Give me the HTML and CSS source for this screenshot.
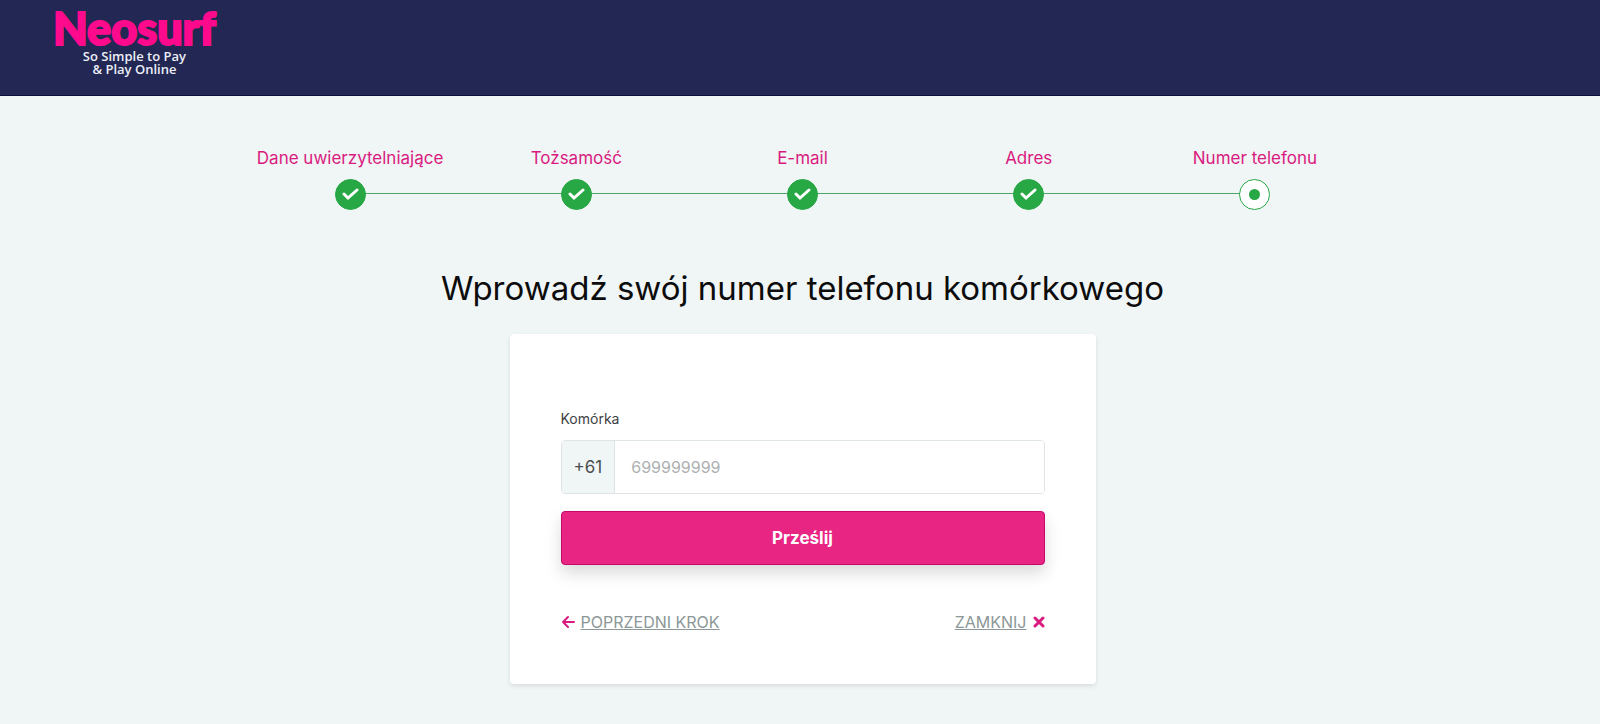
FILE: index.html
```
<!DOCTYPE html>
<html lang="pl">
<head>
    <meta charset="UTF-8">
    <meta name="viewport" content="width=device-width, initial-scale=1.0">
    <title>Neosurf - Numer telefonu</title>
    <link rel="stylesheet" href="styles.css">
</head>
<body>
    <header class="topbar">
        <a class="logo" href="#">
            <span class="logo-name">Neosurf</span>
            <span class="logo-text">So Simple to Pay<br>&amp; Play Online</span>
        </a>
    </header>

    <main class="content">
        <ol class="steps">
            <li class="step done">
                <span class="step-name">Dane uwierzytelniające</span>
                <span class="step-dot"><svg viewBox="0 0 17 17" aria-hidden="true"><path d="M2 8l4 4 9-8"/></svg></span>
            </li>
            <li class="step done">
                <span class="step-name">Tożsamość</span>
                <span class="step-dot"><svg viewBox="0 0 17 17" aria-hidden="true"><path d="M2 8l4 4 9-8"/></svg></span>
            </li>
            <li class="step done">
                <span class="step-name">E-mail</span>
                <span class="step-dot"><svg viewBox="0 0 17 17" aria-hidden="true"><path d="M2 8l4 4 9-8"/></svg></span>
            </li>
            <li class="step done">
                <span class="step-name">Adres</span>
                <span class="step-dot"><svg viewBox="0 0 17 17" aria-hidden="true"><path d="M2 8l4 4 9-8"/></svg></span>
            </li>
            <li class="step current">
                <span class="step-name">Numer telefonu</span>
                <span class="step-dot"></span>
            </li>
        </ol>

        <h1>Wprowadź swój numer telefonu komórkowego</h1>

        <form class="card" id="phone-form">
            <label for="phone">Komórka</label>
            <div class="phone-group">
                <span class="prefix">+61</span>
                <input type="tel" class="inputbox" id="phone" name="phone" placeholder="699999999">
            </div>
            <button type="submit" class="button">Prześlij</button>
            <div class="links">
                <a href="#">
                    <svg viewBox="0 0 14 14" aria-hidden="true"><path d="M13 7H2M7 2L2 7l5 5"/></svg>
                    <span>POPRZEDNI KROK</span>
                </a>
                <a href="#">
                    <span>ZAMKNIJ</span>
                    <svg class="close" viewBox="0 0 12 12" aria-hidden="true"><path d="M2 2l8 8M10 2l-8 8"/></svg>
                </a>
            </div>
        </form>
    </main>
</body>
</html>
```
FILE: styles.css
```
* {
    box-sizing: border-box;
}

body {
    margin: 0;
    min-height: 100vh;
    background-color: #f0f5f6;
    color: #0c0c0c;
    font-family: Inter, Roboto, sans-serif;
    font-size: 17px;
    line-height: 24px;
}

.topbar {
    display: flex;
    height: 96px;
    padding: 6px 53px;
    background-color: #222753;
    border-bottom: 1px solid #0d1038;
}

.logo {
    display: flex;
    flex-direction: column;
    align-items: center;
    text-decoration: none;
}

.logo-name {
    color: #ff0a8c;
    font-family: Lato, sans-serif;
    font-size: 45px;
    font-weight: 900;
    line-height: 44px;
    -webkit-text-stroke: 2px #ff0a8c;
}

.logo-text {
    color: #eceef8;
    font-family: "Open Sans", sans-serif;
    font-size: 13px;
    font-weight: 600;
    line-height: 13px;
    text-align: center;
}

.content {
    display: flex;
    flex-direction: column;
    align-items: center;
    padding: 50px 0 38px 5px;
}

.steps {
    display: flex;
    width: 100%;
    max-width: 1131px;
    margin: 0;
    padding: 0;
    list-style: none;
}

.step {
    position: relative;
    flex: 1;
    display: flex;
    flex-direction: column;
    align-items: center;
    gap: 9px;
    color: #d91b80;
}

/* line to the next step */
.step:not(:last-child)::after {
    content: "";
    position: absolute;
    left: 50%;
    bottom: 16px;
    width: 100%;
    height: 1px;
    background-color: #4aa566;
}

.step-name {
    white-space: nowrap;
}

.step-dot {
    position: relative;
    z-index: 1;
    display: flex;
    align-items: center;
    justify-content: center;
    width: 31px;
    height: 31px;
    border: 1px solid #28a745;
    border-radius: 50%;
    background-color: #28a745;
}

.step-dot svg {
    width: 17px;
    height: 17px;
    fill: none;
    stroke: white;
    stroke-width: 3;
    stroke-linecap: round;
}

.current .step-dot {
    background-color: white;
}

.current .step-dot::before {
    content: "";
    width: 11px;
    height: 11px;
    border-radius: 50%;
    background-color: #28a745;
}

h1 {
    margin: 56px 0 24px;
    font-size: 33px;
    font-weight: 400;
    line-height: 44px;
    text-align: center;
}

.card {
    width: 100%;
    max-width: 586px;
    padding: 74px 51px 50px;
    background-color: white;
    border-radius: 4px;
    box-shadow: 0 2px 4px rgba(0, 0, 0, 0.1);
}

.card label {
    display: block;
    margin-bottom: 10px;
    color: #3d4144;
    font-size: 14px;
    line-height: 22px;
}

.phone-group {
    display: flex;
    height: 54px;
    margin-bottom: 17px;
    border: 1px solid #dfe4e5;
    border-radius: 4px;
    overflow: hidden;
}

.prefix {
    display: flex;
    align-items: center;
    padding: 0 12px;
    background-color: #f0f5f6;
    border-right: 1px solid #dfe4e5;
    color: #4a4e51;
}

.inputbox {
    flex: 1;
    min-width: 0;
    padding: 0 16px;
    border: none;
    outline: none;
    color: #4a4e51;
    font: inherit;
    font-size: 16px;
}

.inputbox::placeholder {
    color: #adb0b1;
    opacity: 1;
}

.button {
    display: block;
    width: 100%;
    height: 54px;
    border: 1px solid #c5086b;
    border-radius: 4px;
    background-color: #e92583;
    box-shadow: 0 8px 16px rgba(0, 0, 0, 0.15);
    color: white;
    font: inherit;
    font-weight: 700;
    cursor: pointer;
}

.links {
    display: flex;
    justify-content: space-between;
    margin-top: 45px;
    font-size: 16px;
}

.links a {
    display: flex;
    align-items: center;
    gap: 6px;
    color: #8c9797;
    text-decoration: none;
}

.links span {
    text-decoration: underline;
}

.links svg {
    width: 14px;
    height: 14px;
    fill: none;
    stroke: #d91b80;
    stroke-width: 2;
    stroke-linecap: round;
    stroke-linejoin: round;
}

.links .close {
    width: 12px;
    height: 12px;
    stroke-width: 3;
}
```
